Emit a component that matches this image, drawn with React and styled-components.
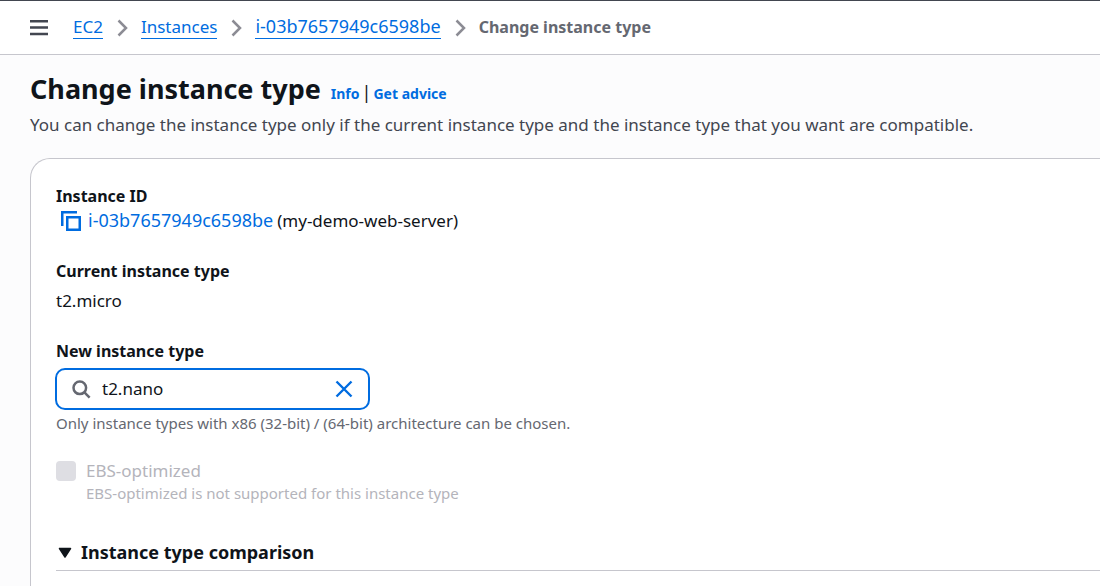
import React, { useState } from "react";
import styled, { createGlobalStyle } from "styled-components";

const GlobalStyle = createGlobalStyle`
  *, *::before, *::after { box-sizing: border-box; }
  html { overflow: hidden; }
  body {
    margin: 0;
    background: #fcfcfd;
    color: #0f141a;
    font-family: "Noto Sans", "Open Sans", sans-serif;
    font-size: 17px;
    line-height: 25px;
  }
  h1, h2, p, ol, dl, dd { margin: 0; padding: 0; }
`;

const Link = styled.a`
  color: #006ce0;
  text-decoration: none;
`;

const ResourceLink = styled(Link)`
  font-size: 18px;
`;

const IconButton = styled.button`
  display: flex;
  flex: none;
  padding: 0;
  border: 0;
  background: none;
  color: ${(p) => p.$color || "#006ce0"};
  cursor: pointer;
`;

const TopBar = styled.header`
  display: flex;
  align-items: center;
  gap: 24px;
  height: 55px;
  padding: 0 30px;
  background: #fff;
  border-top: 1px solid #424650;
  border-bottom: 1px solid #c6c6cd;
`;

const Crumbs = styled.ol`
  display: flex;
  align-items: center;
  list-style: none;
  white-space: nowrap;
`;

const Crumb = styled.li`
  display: flex;
  align-items: center;
  color: #656871;
  font-size: ${(p) => (p.$current ? "16px" : "17px")};
  font-weight: ${(p) => (p.$current ? 700 : 400)};

  svg { margin: 0 12px 0 14px; }
`;

const CrumbLink = styled(Link)`
  font-size: ${(p) => (p.$resource ? "18px" : "17px")};
  line-height: 21px;
  padding-bottom: 1px;
  border-bottom: 1px solid currentColor;
`;

const Main = styled.main`
  padding: 17px 0 0 30px;
`;

const TitleRow = styled.div`
  display: flex;
  align-items: baseline;
  gap: 10px;
  line-height: 33px;
`;

const Title = styled.h1`
  font-size: 27px;
  font-weight: 700;
`;

const TitleLinks = styled.div`
  display: flex;
  align-items: baseline;
  gap: 2px;
  font-size: 14px;
  font-weight: 700;
`;

const Divider = styled.span`
  font-size: 18px;
  font-weight: 400;
  line-height: 20px;
`;

const Description = styled.p`
  margin-top: 2px;
  color: #424650;
`;

const Card = styled.section`
  display: flex;
  flex-direction: column;
  gap: 25px;
  margin-top: 21px;
  min-height: 440px;
  padding: 25px 0 0 25px;
  background: #fff;
  border: 1px solid #c6c6cd;
  border-right: 0;
  border-bottom: 0;
  border-top-left-radius: 20px;
`;

const Details = styled.dl`
  display: flex;
  flex-direction: column;
  gap: 25px;
`;

const Detail = styled.div`
  display: flex;
  flex-direction: column;
  gap: ${(p) => p.$gap || "0"};
`;

const Term = styled.dt`
  font-size: 16px;
  font-weight: 700;
`;

const Value = styled.dd`
  display: flex;
  align-items: center;
  gap: 4px;
  padding-bottom: 2px;
  line-height: 23px;
`;

const CopyButton = styled(IconButton)`
  padding: 0 3px 0 5px;
`;

const Field = styled.div`
  display: flex;
  flex-direction: column;
  align-items: flex-start;
  gap: 4px;
`;

const FieldLabel = styled.label`
  font-size: 16px;
  font-weight: 700;
`;

const SearchBox = styled.div`
  display: flex;
  align-items: center;
  gap: 11px;
  width: 100%;
  max-width: 315px;
  height: 42px;
  margin-left: -1px;
  padding: 0 15px;
  background: #fff;
  border: 2px solid #006ce0;
  border-radius: 10px;
  color: #656871;
`;

const SearchInput = styled.input`
  flex: 1;
  min-width: 0;
  padding: 0 0 2px;
  border: 0;
  outline: 0;
  background: transparent;
  color: #0f141a;
  font: inherit;
`;

const Hint = styled.p`
  padding-bottom: 2px;
  color: ${(p) => (p.$disabled ? "#b4b4bb" : "#656871")};
  font-size: 15px;
  line-height: 18px;
`;

const CheckRow = styled.div`
  display: flex;
  align-items: flex-start;
  gap: 10px;
`;

const Checkbox = styled.input`
  appearance: none;
  flex: none;
  width: 20px;
  height: 20px;
  margin: 2px 0 0;
  background: #dedee3;
  border-radius: 4px;
`;

const CheckLabel = styled.label`
  display: block;
  padding-bottom: 2px;
  color: #b4b4bb;
  line-height: 23px;
`;

const Section = styled.h2`
  margin-top: 11px;
  padding-bottom: 5px;
  border-bottom: 1px solid #c6c6cd;
  line-height: 25px;
`;

const SectionToggle = styled.button`
  display: flex;
  align-items: center;
  gap: 9px;
  padding: 0 0 0 2px;
  border: 0;
  background: none;
  color: #0f141a;
  font: inherit;
  font-size: 18px;
  font-weight: 700;
  cursor: pointer;
`;

function MenuIcon() {
  return (
    <svg width="19" height="16" viewBox="0 0 19 16" aria-hidden="true">
      <path d="M0 1.2h18M0 7.5h18M0 14h18" stroke="currentColor" strokeWidth="2.4" />
    </svg>
  );
}

function ChevronIcon() {
  return (
    <svg width="12" height="18" viewBox="0 0 12 18" fill="none" aria-hidden="true">
      <path d="M1.5 1.5 9 9l-7.5 7.5" stroke="#8c8c94" strokeWidth="2.5" />
    </svg>
  );
}

function CopyIcon() {
  return (
    <svg width="20" height="20" viewBox="0 0 20 20" fill="none" aria-hidden="true">
      <path d="M1.25 15V1.25H16M6.25 6.25h12.5v12.5H6.25z" stroke="currentColor" strokeWidth="2.5" />
    </svg>
  );
}

function SearchIcon() {
  return (
    <svg width="19" height="19" viewBox="0 0 19 19" fill="none" aria-hidden="true">
      <circle cx="7.8" cy="7.8" r="6.3" stroke="currentColor" strokeWidth="2.5" />
      <path d="m12.2 12.2 5.4 5.4" stroke="currentColor" strokeWidth="2.5" />
    </svg>
  );
}

function CloseIcon() {
  return (
    <svg width="18" height="18" viewBox="0 0 18 18" fill="none" aria-hidden="true">
      <path d="m1.5 1.5 15 15M16.5 1.5l-15 15" stroke="currentColor" strokeWidth="2.4" />
    </svg>
  );
}

function CaretIcon() {
  return (
    <svg width="14" height="12" viewBox="0 0 14 12" aria-hidden="true">
      <path d="M1.5 1.5h11L7 10z" fill="currentColor" stroke="currentColor" strokeWidth="1.5" strokeLinejoin="round" />
    </svg>
  );
}

const trail = [
  { name: "EC2" },
  { name: "Instances" },
  { name: "i-03b7657949c6598be", resource: true },
];

export default function App() {
  const [type, setType] = useState("t2.nano");

  return (
    <>
      <GlobalStyle />
      <TopBar>
        <IconButton type="button" aria-label="Open navigation" $color="#424650">
          <MenuIcon />
        </IconButton>
        <nav aria-label="Breadcrumbs">
          <Crumbs>
            {trail.map(({ name, resource }) => (
              <Crumb key={name}>
                <CrumbLink href="#" $resource={resource}>{name}</CrumbLink>
                <ChevronIcon />
              </Crumb>
            ))}
            <Crumb $current aria-current="page">Change instance type</Crumb>
          </Crumbs>
        </nav>
      </TopBar>
      <Main>
        <TitleRow>
          <Title>Change instance type</Title>
          <TitleLinks>
            <Link href="#">Info</Link>
            <Divider>|</Divider>
            <Link href="#">Get advice</Link>
          </TitleLinks>
        </TitleRow>
        <Description>
          You can change the instance type only if the current instance type and the instance type that you want are compatible.
        </Description>
        <Card>
          <Details>
            <Detail>
              <Term>Instance ID</Term>
              <Value>
                <CopyButton type="button" aria-label="Copy instance ID">
                  <CopyIcon />
                </CopyButton>
                <ResourceLink href="#">i-03b7657949c6598be</ResourceLink>
                <span>(my-demo-web-server)</span>
              </Value>
            </Detail>
            <Detail $gap="5px">
              <Term>Current instance type</Term>
              <Value>t2.micro</Value>
            </Detail>
          </Details>
          <Field>
            <FieldLabel htmlFor="instance-type">New instance type</FieldLabel>
            <SearchBox>
              <SearchIcon />
              <SearchInput
                id="instance-type"
                type="text"
                value={type}
                aria-describedby="instance-type-hint"
                onChange={(e) => setType(e.target.value)}
              />
              <IconButton type="button" aria-label="Clear" onClick={() => setType("")}>
                <CloseIcon />
              </IconButton>
            </SearchBox>
            <Hint id="instance-type-hint">
              Only instance types with x86 (32-bit) / (64-bit) architecture can be chosen.
            </Hint>
          </Field>
          <CheckRow>
            <Checkbox id="ebs" type="checkbox" disabled aria-describedby="ebs-hint" />
            <div>
              <CheckLabel htmlFor="ebs">EBS-optimized</CheckLabel>
              <Hint id="ebs-hint" $disabled>EBS-optimized is not supported for this instance type</Hint>
            </div>
          </CheckRow>
          <Section>
            <SectionToggle type="button" aria-expanded="true">
              <CaretIcon />
              Instance type comparison
            </SectionToggle>
          </Section>
        </Card>
      </Main>
    </>
  );
}
